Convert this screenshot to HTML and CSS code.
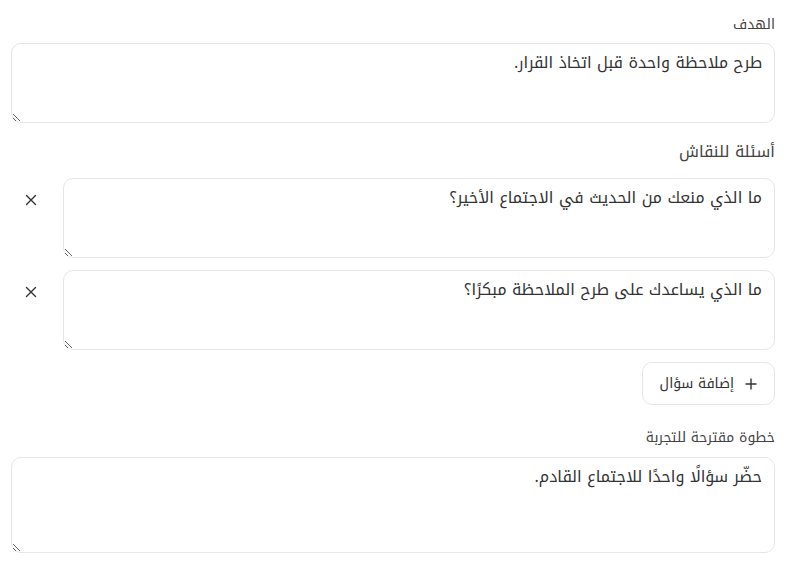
FILE: index.html
```html
<!DOCTYPE html>
<html lang="ar" dir="rtl">
<head>
    <meta charset="UTF-8">
    <meta name="viewport" content="width=device-width, initial-scale=1.0">
    <title>جلسة نقاش</title>
    <link rel="stylesheet" href="styles.css">
</head>
<body>
    <form class="form">
        <div class="field">
            <label for="goal" class="label">الهدف</label>
            <textarea id="goal" class="input" rows="2">طرح ملاحظة واحدة قبل اتخاذ القرار.</textarea>
        </div>

        <div class="field questions">
            <div class="section-title">أسئلة للنقاش</div>
            <div class="question">
                <textarea class="input" rows="2">ما الذي منعك من الحديث في الاجتماع الأخير؟</textarea>
                <button type="button" class="remove" aria-label="حذف">
                    <svg width="14" height="14" viewBox="0 0 14 14"><path d="M2.5 2.5L11.5 11.5M11.5 2.5L2.5 11.5" stroke="#333" stroke-width="1.4" stroke-linecap="round"/></svg>
                </button>
            </div>
            <div class="question">
                <textarea class="input" rows="2">ما الذي يساعدك على طرح الملاحظة مبكرًا؟</textarea>
                <button type="button" class="remove" aria-label="حذف">
                    <svg width="14" height="14" viewBox="0 0 14 14"><path d="M2.5 2.5L11.5 11.5M11.5 2.5L2.5 11.5" stroke="#333" stroke-width="1.4" stroke-linecap="round"/></svg>
                </button>
            </div>
            <button type="button" class="add">
                <svg width="12" height="12" viewBox="0 0 12 12"><path d="M6 1V11M1 6H11" stroke="#333" stroke-width="1.4" stroke-linecap="round"/></svg>
                إضافة سؤال
            </button>
        </div>

        <div class="field step">
            <label for="step" class="label">خطوة مقترحة للتجربة</label>
            <textarea id="step" class="input tall" rows="3">حضّر سؤالًا واحدًا للاجتماع القادم.</textarea>
        </div>
    </form>
</body>
</html>
```

FILE: styles.css
```css
* {
    margin: 0;
    padding: 0;
    box-sizing: border-box;
}

body {
    font-family: 'Noto Kufi Arabic', 'Noto Sans Arabic', 'DejaVu Sans', sans-serif;
    background-color: #fff;
    color: #333;
}

.form {
    display: flex;
    flex-direction: column;
    padding: 15px 16px 0 11px;
}

.field {
    display: flex;
    flex-direction: column;
    gap: 8px;
}

.questions {
    margin-top: 18px;
    gap: 12px;
}

.step {
    margin-top: 23px;
    gap: 9px;
}

.label {
    font-size: 14px;
    line-height: 20px;
    color: #444;
}

.section-title {
    font-size: 16px;
    line-height: 22px;
    color: #444;
    margin-bottom: 3px;
}

.input {
    width: 100%;
    height: 80px;
    padding: 7px 12px;
    font-family: inherit;
    font-size: 16px;
    line-height: 24px;
    color: #333;
    border: 1px solid #e6e6e6;
    border-radius: 10px;
    resize: vertical;
    background-color: #fff;
}

.input.tall {
    height: 96px;
}

.question {
    display: flex;
    align-items: flex-start;
    gap: 12px;
}

.remove {
    flex: 0 0 40px;
    height: 44px;
    background: none;
    border: none;
    cursor: pointer;
    display: flex;
    align-items: center;
    justify-content: center;
}

.add {
    align-self: flex-start;
    display: flex;
    align-items: center;
    gap: 11px;
    padding: 0 17px;
    height: 43px;
    font-family: inherit;
    font-size: 14px;
    color: #333;
    background-color: #fff;
    border: 1px solid #e6e6e6;
    border-radius: 10px;
    cursor: pointer;
}
```
